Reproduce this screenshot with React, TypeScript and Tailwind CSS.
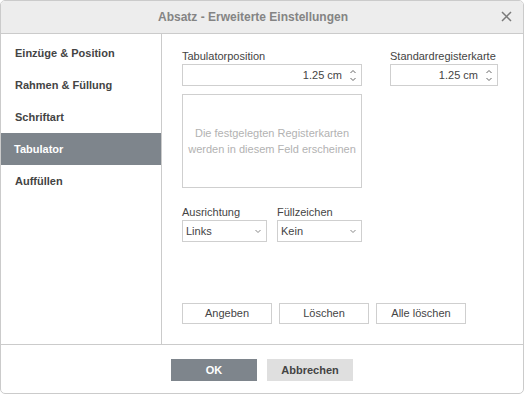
const Spin = () => (
  <div className="flex flex-col items-center justify-center gap-[5px] text-[#666]">
    <svg width="6" height="3" viewBox="0 0 6 3"><path d="M0.5 3L3 0.5L5.5 3" fill="none" stroke="currentColor" strokeWidth="1" /></svg>
    <svg width="6" height="3" viewBox="0 0 6 3"><path d="M0.5 0L3 2.5L5.5 0" fill="none" stroke="currentColor" strokeWidth="1" /></svg>
  </div>
);

const Caret = () => (
  <svg width="6" height="3" viewBox="0 0 6 3" className="text-[#888]"><path d="M0.5 0L3 2.5L5.5 0" fill="none" stroke="currentColor" strokeWidth="1" /></svg>
);

const menu = ["Einzüge & Position", "Rahmen & Füllung", "Schriftart", "Tabulator", "Auffüllen"];

export default function App() {
  return (
    <div className="w-[524px] h-[394px] bg-white text-[11px] text-[#444] font-['Liberation_Sans',Arial,sans-serif]">
      <div className="h-full flex flex-col border border-[#cbcbcb] rounded-[5px] overflow-hidden">
        <div className="h-[33px] shrink-0 bg-[#ededed] border-b border-[#cbcbcb] flex items-center justify-center pr-[18px] relative">
          <span className="text-[12px] font-bold text-[#848484]">Absatz - Erweiterte Einstellungen</span>
          <svg className="absolute right-[11px] top-[10px]" width="11" height="11" viewBox="0 0 11 11">
            <path d="M1 1L10 10M10 1L1 10" stroke="#7a7a7a" strokeWidth="1.5" />
          </svg>
        </div>
        <div className="h-[311px] shrink-0 flex border-b border-[#cbcbcb]">
          <div className="w-[161px] shrink-0 border-r border-[#cbcbcb] pt-[3px]">
            {menu.map((m) => (
              <div
                key={m}
                className={
                  m === "Tabulator"
                    ? "h-[32px] flex items-center pl-[13px] font-bold bg-[#7e858c] text-white"
                    : "h-[32px] flex items-center pl-[14px] font-bold"
                }
              >
                {m}
              </div>
            ))}
          </div>
          <div className="flex-1 pl-[20px] pt-[15px] flex flex-col">
            <div className="flex gap-[28px]">
              <div className="w-[180px]">
                <div className="h-[14px] leading-[14px]">Tabulatorposition</div>
                <div className="mt-[1px] h-[22px] border border-[#cfcfcf] flex items-center justify-end pr-[5px] gap-[8px]">
                  <span>1.25 cm</span>
                  <Spin />
                </div>
                <div className="mt-[8px] h-[94px] border border-[#cfcfcf] flex items-center justify-center text-center text-[#b2b2b2] leading-[16px]">
                  Die festgelegten Registerkarten
                  <br />
                  werden in diesem Feld erscheinen
                </div>
              </div>
              <div className="w-[108px]">
                <div className="h-[14px] leading-[14px]">Standardregisterkarte</div>
                <div className="mt-[1px] h-[22px] border border-[#cfcfcf] flex items-center justify-end pr-[5px] gap-[8px]">
                  <span>1.25 cm</span>
                  <Spin />
                </div>
              </div>
            </div>
            <div className="flex gap-[10px] mt-[17px]">
              <div className="w-[85px]">
                <div className="h-[14px] leading-[14px]">Ausrichtung</div>
                <div className="mt-[1px] h-[22px] border border-[#cfcfcf] flex items-center justify-between pl-[3px] pr-[5px]">
                  <span>Links</span>
                  <Caret />
                </div>
              </div>
              <div className="w-[85px]">
                <div className="h-[14px] leading-[14px]">Füllzeichen</div>
                <div className="mt-[1px] h-[22px] border border-[#cfcfcf] flex items-center justify-between pl-[3px] pr-[5px]">
                  <span>Kein</span>
                  <Caret />
                </div>
              </div>
            </div>
            <div className="flex gap-[7px] mt-[61px]">
              {["Angeben", "Löschen", "Alle löschen"].map((b) => (
                <div key={b} className="w-[90px] h-[21px] border border-[#cfcfcf] flex items-center justify-center">
                  {b}
                </div>
              ))}
            </div>
          </div>
        </div>
        <div className="flex-1 flex justify-center items-start pt-[14px] gap-[10px]">
          <div className="w-[86px] h-[22px] bg-[#7e858c] text-white font-bold flex items-center justify-center">OK</div>
          <div className="w-[86px] h-[22px] bg-[#dfdfdf] text-[#444] font-bold flex items-center justify-center">Abbrechen</div>
        </div>
      </div>
    </div>
  );
}
